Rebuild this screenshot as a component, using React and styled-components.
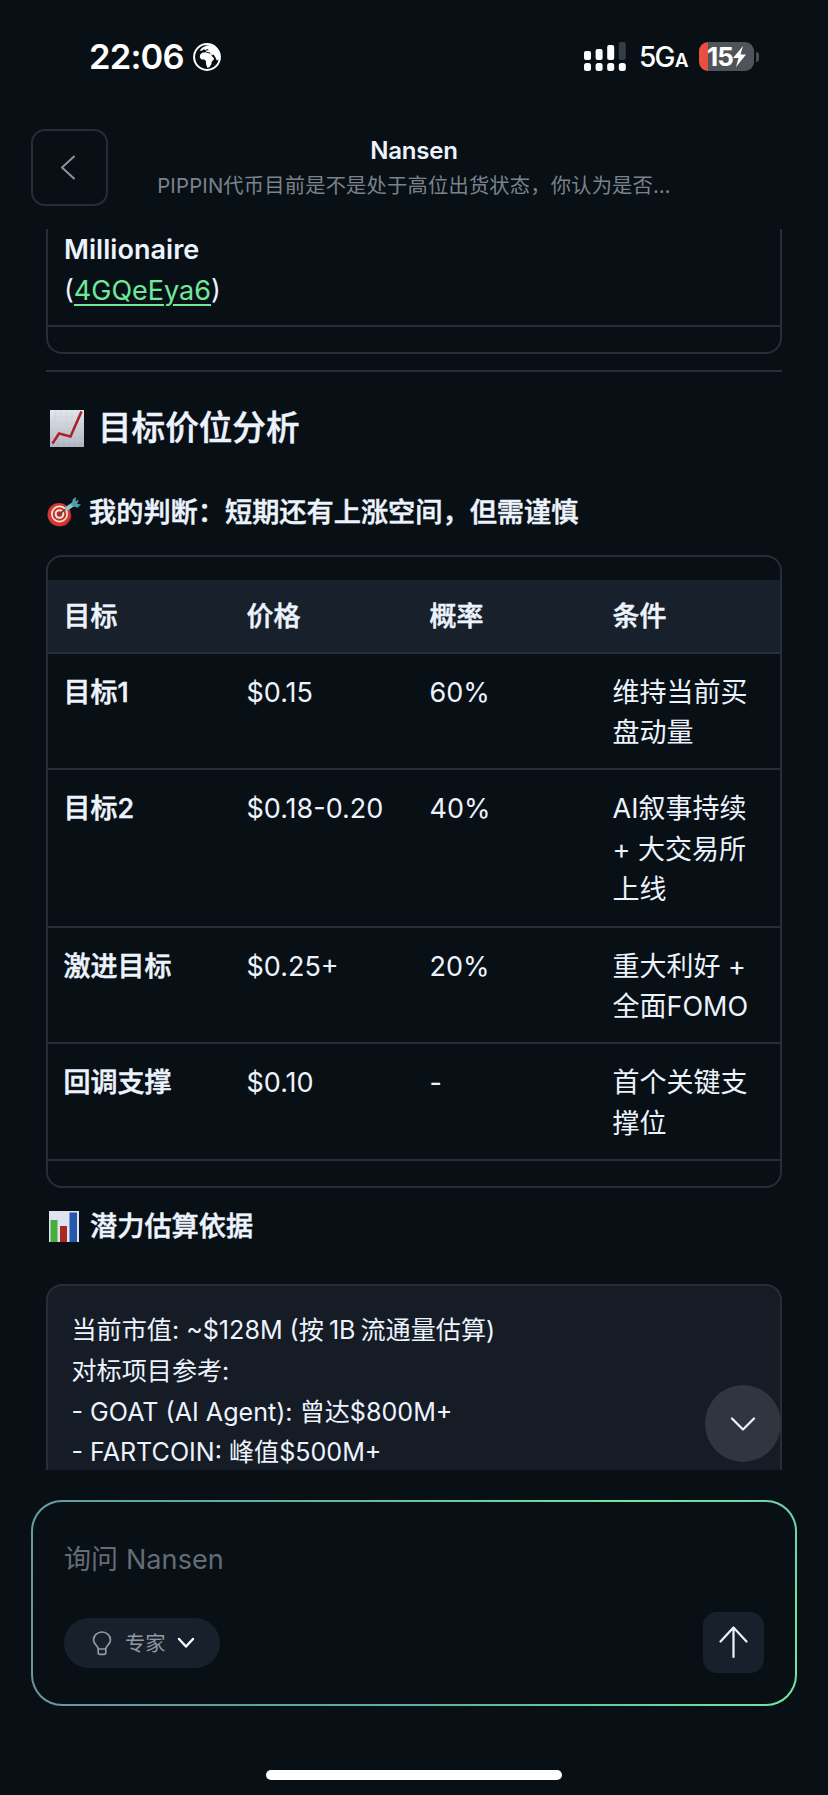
import React from 'react';
import styled, { createGlobalStyle, css } from 'styled-components'

const GlobalStyle = createGlobalStyle`
    * {
        box-sizing: border-box;
    }
    body {
        margin: 0;
        background: #081016;
    }
`
// halfway between the medium and bold cuts of the CJK font
const semibold = css`
    font-weight: 500;
    -webkit-text-stroke: 0.5px currentColor;
`
const Screen = styled.div`
    display: flex;
    flex-direction: column;
    width: 828px;
    height: 1795px;
    overflow: hidden;
    background: #081016;
    color: #edf3fd;
    font-family: Inter, "Noto Sans CJK SC", sans-serif;
    font-size: 27px;
    line-height: 41px;
    white-space: nowrap;
`
const StatusBar = styled.div`
    display: flex;
    align-items: center;
    height: 113px;
    padding: 0 69px 0 89px;
    flex-shrink: 0;
`
const Clock = styled.div`
    width: 104px;
    font-size: 34.5px;
    font-weight: 600;
    letter-spacing: -0.8px;
    color: #ffffff;
`
const StatusRight = styled.div`
    display: flex;
    align-items: center;
    margin-left: auto;
`
const Network = styled.div`
    width: 73px;
    padding: 5px 0 0 13px;
    font-size: 28px;
    font-weight: 500;
    letter-spacing: -1.7px;
    color: #ffffff;

    small {
        margin-left: 1px;
        font-size: 19px;
        font-weight: 600;
    }
`
const Battery = styled.div`
    display: flex;
    align-items: center;
    justify-content: center;
    width: 55px;
    height: 29px;
    border-radius: 9px;
    background: linear-gradient(90deg, #ea4e3f 9px, #4f545b 9px);
    font-size: 26px;
    font-weight: 700;
    letter-spacing: -0.8px;
    color: #ffffff;
`
const BatteryCap = styled.div`
    width: 3px;
    height: 10px;
    margin-left: 2px;
    border-radius: 0 3px 3px 0;
    background: #4a4f56;
`
const Header = styled.div`
    display: grid;
    grid-template-columns: 77px 1fr 77px;
    align-items: start;
    height: 116px;
    padding: 16px 31px 0;
    flex-shrink: 0;
`
const BackButton = styled.button`
    display: flex;
    align-items: center;
    justify-content: center;
    width: 77px;
    height: 77px;
    padding: 0 4px 0 0;
    border: 2px solid #272d34;
    border-radius: 14px;
    background: none;
`
const HeaderText = styled.div`
    display: flex;
    flex-direction: column;
    align-items: center;
    padding-top: 4px;
`
const Title = styled.div`
    height: 36px;
    line-height: 36px;
    font-size: 24px;
    font-weight: 600;
    letter-spacing: -0.2px;
`
const Subtitle = styled.div`
    height: 32px;
    line-height: 33px;
    font-size: 20.3px;
    letter-spacing: 0.18px;
    color: #7b828c;
`
const Scroller = styled.div`
    height: 1241px;
    padding: 0 46px;
    overflow: hidden;
    flex-shrink: 0;
`
const Sheet = styled.div`
    height: ${props => props.height}px;
    padding: ${props => props.open ? '0' : '23px'} 0 0;
    border: 2px solid #272e35;
    border-top-width: ${props => props.open ? '0' : '2px'};
    border-radius: ${props => props.open ? '0 0 16px 16px' : '16px'};
`
const Row = styled.div`
    display: grid;
    grid-template-columns: repeat(4, 183px);
    padding: ${props => props.head ? '17px 0 14px' : '19px 0 14.5px'};
    border-bottom: 2px solid #272e35;
    background: ${props => props.head ? '#18212b' : 'none'};
    line-height: 40.6px;
    ${props => props.head && semibold}
`
const Cell = styled.div`
    padding-left: 15.5px;
    ${props => props.strong && semibold}
`
const Holder = styled.div`
    height: 98px;
    padding: 0 16px;
    border-bottom: 2px solid #272e35;
`
const HolderName = styled.div`
    font-weight: 600;
    letter-spacing: 0.05px;
`
const Link = styled.a`
    color: #6fe89b;
    text-decoration: underline;
    text-decoration-thickness: 2px;
    text-underline-offset: 4px;
`
const Divider = styled.div`
    height: 2px;
    margin-top: 16px;
    background: #272e35;
`
const Heading = styled.div`
    display: flex;
    align-items: center;
    height: 50px;
    margin-top: 30px;
    font-size: 33.6px;
    ${semibold}

    svg {
        margin: 2px 14px 0 4px;
    }
`
const SubHeading = styled.div`
    display: flex;
    align-items: center;
    height: 42px;
    margin: ${props => props.gap} 0 ${props => props.after}px;
    font-size: 27.2px;
    ${semibold}

    svg {
        flex-shrink: 0;
        margin-right: 8px;
    }
`
const CodeBlock = styled.div`
    height: 240px;
    padding: 24px 23.5px;
    border: 2px solid #272e35;
    border-radius: 16px;
    background: #151c25;
    font-size: 25.1px;
`
const CodeLine = styled.div`
    height: 40.8px;
`
const Amount = styled.span`
    margin: 0 5px;
`
const ScrollDown = styled.button`
    position: absolute;
    left: 705px;
    top: 1385px;
    display: flex;
    align-items: center;
    justify-content: center;
    width: 76px;
    height: 77px;
    padding: 2px 0 0;
    border: 0;
    border-radius: 50%;
    background: #30363f;
`
const Composer = styled.div`
    display: flex;
    flex-direction: column;
    justify-content: space-between;
    width: 766px;
    height: 206px;
    margin: 30px 31px 0;
    padding: 37px 31px 31px;
    flex-shrink: 0;
    border: 2px solid transparent;
    border-radius: 31px;
    background:
        linear-gradient(#081016, #081016) padding-box,
        linear-gradient(52deg, #6d93a1 0%, #5fa39f 26%, #62b9a0 50%, #75e6a0 82%, #74cfa9 100%) border-box;
`
const Placeholder = styled.div`
    color: #656c75;
    letter-spacing: 0.1px;
`
const Toolbar = styled.div`
    display: flex;
    align-items: center;
    justify-content: space-between;
`
const ModePill = styled.div`
    display: flex;
    align-items: center;
    width: 156px;
    height: 50px;
    padding: 1px 0 0 28px;
    border-radius: 25px;
    background: #18212b;
    font-size: 20.3px;
    color: #9299a4;

    span {
        width: 65px;
        padding-left: 13px;
    }
`
const SendButton = styled.button`
    display: flex;
    align-items: center;
    justify-content: center;
    width: 61px;
    height: 61px;
    padding: 0;
    border: 0;
    border-radius: 14px;
    background: #18212b;
`
const HomeBar = styled.div`
    width: 296px;
    height: 10px;
    margin: 64px auto 0;
    flex-shrink: 0;
    border-radius: 5px;
    background: #ffffff;
`

const Chevron = ({ width, height, points, color, stroke = 2 }) => (
  <svg width={width} height={height} fill="none" stroke={color} strokeWidth={stroke} strokeLinecap="round" strokeLinejoin="round">
    <polyline points={points} />
  </svg>
)

const Globe = () => (
  <svg width="28" height="28" viewBox="0 0 28 28">
    <circle cx="14" cy="14" r="12.9" fill="none" stroke="#fff" strokeWidth="2" />
    <path fill="#fff" d="M6.500 7.500l3-3 4-2 4-.5 4 1.500 3.500 4 1.500 5-.5 4-2.200 1-1.300-3-2-3-1.500.8-2.500-3-3-.3-1-1.200 3-.5-.5-1.200-2.500.8-2-.6-1.500 1.400z" />
    <path fill="#fff" d="M7 12l2-2.200 3.500-.6 2 .9 3 .4 1.500 2.800 2 2-.3 1.500-2 2-.4 2.500-2 3-2 .5-1.200-3.500-.2-3.300-1.400-1.500-3 .1-1.700-2z" />
  </svg>
)

const Signal = () => (
  <svg width="42" height="29" viewBox="0 0 42 29" fill="#fff">
    <rect x="0" y="9" width="7" height="9" rx="2" />
    <rect x="11.600" y="7" width="7" height="11" rx="2" />
    <rect x="23.200" y="3" width="7" height="15" rx="2" />
    <rect x="34.800" y="0" width="7" height="18" rx="2" fill="#363c43" />
    {[0, 11.6, 23.2, 34.8].map(x => <rect key={x} x={x} y="21" width="7" height="8" rx="2.500" />)}
  </svg>
)

const Bolt = () => (
  <svg width="13" height="21" viewBox="0 0 13 21">
    <path fill="#fff" d="M10 0L0 12h5.500L3 21 13 8.500H7.500z" />
  </svg>
)

const ChartUp = () => (
  <svg width="34" height="37" viewBox="0 0 34 37">
    <defs>
      <linearGradient id="paper" x1="0" y1="0" x2="0" y2="1">
        <stop offset="0" stopColor="#e2e7ee" />
        <stop offset="1" stopColor="#aeb4bd" />
      </linearGradient>
    </defs>
    <rect width="34" height="37" fill="url(#paper)" />
    <path d="M5.500 1v35M11 1v35M16.500 1v35M22 1v35M27.500 1v35M1 7h32M1 13h32M1 19h32M1 25h32M1 31h32" stroke="#c8ced8" strokeWidth="0.500" />
    <path d="M2.500 33.500L9 23.500l11.500 3L31.500 1.500" fill="none" stroke="#ad2229" strokeWidth="2.600" />
  </svg>
)

const Target = () => (
  <svg width="35" height="30" viewBox="0 0 35 30">
    <ellipse cx="14.500" cy="18.500" rx="11" ry="11" fill="#8e211d" />
    <circle cx="13" cy="17.500" r="11.500" fill="#d5382e" />
    <circle cx="13.500" cy="17" r="8.500" fill="#f3e4dc" />
    <circle cx="13.500" cy="17" r="6.800" fill="#c5352c" />
    <circle cx="13.500" cy="17" r="4.800" fill="#f3e4dc" />
    <circle cx="13.500" cy="17" r="2.800" fill="#b52a24" />
    <path d="M13.500 17L23 9.500" stroke="#7a3f36" strokeWidth="1.600" />
    <path d="M21 11.500l6-4" stroke="#8fc7cf" strokeWidth="4" strokeLinecap="round" />
    <path d="M25 8.500l2-6.500 3-2-.3 4L33 3l-2 3.800 4 .7-3.500 3.200z" fill="#4f9ba8" />
  </svg>
)

const Bars = () => (
  <svg width="36" height="31" viewBox="0 0 36 31">
    <rect x="3" width="30" height="31" fill="#e0e3f0" />
    <rect x="4.500" y="9" width="7" height="22" fill="#47ad3d" />
    <rect x="14" y="15" width="7" height="16" fill="#a92820" />
    <rect x="23.500" y="1.500" width="7.500" height="29.500" fill="#2457ae" />
  </svg>
)

const Bulb = () => (
  <svg width="20" height="25" viewBox="0 0 20 25" fill="none" stroke="#9299a4" strokeWidth="1.700" strokeLinejoin="round">
    <path d="M6.200 18C6 14.500 1.500 13.500 1.500 9a8.500 8 0 0 1 17 0c0 4.500-4.500 5.500-4.700 9z" />
    <path d="M6.200 18v3.500q0 1.800 1.800 1.800h4q1.800 0 1.800-1.800V18" />
  </svg>
)

const ArrowUp = () => (
  <svg width="29" height="33" viewBox="0 0 29 33" fill="none" stroke="#edf3fd" strokeWidth="2.200" strokeLinecap="round" strokeLinejoin="round">
    <path d="M14.500 31V1.500M1.500 15.500l13-14 13 14" />
  </svg>
)

const targets = [
  { name: '目标1', price: '$0.15', odds: '60%', lines: ['维持当前买', '盘动量'] },
  { name: '目标2', price: '$0.18-0.20', odds: '40%', lines: ['AI叙事持续', '+ 大交易所', '上线'] },
  { name: '激进目标', price: '$0.25+', odds: '20%', lines: ['重大利好 +', '全面FOMO'] },
  { name: '回调支撑', price: '$0.10', odds: '-', lines: ['首个关键支', '撑位'] },
]

const App = () => {
  return (
    <Screen>
      <GlobalStyle />
      <StatusBar>
        <Clock>22:06</Clock>
        <Globe />
        <StatusRight>
          <Signal />
          <Network>5G<small>A</small></Network>
          <Battery>15<Bolt /></Battery>
          <BatteryCap />
        </StatusRight>
      </StatusBar>
      <Header>
        <BackButton>
          <Chevron width={16} height={25} points="14,1.500 2,12.500 14,23.500" color="#8d939b" />
        </BackButton>
        <HeaderText>
          <Title>Nansen</Title>
          <Subtitle>PIPPIN代币目前是不是处于高位出货状态，你认为是否…</Subtitle>
        </HeaderText>
      </Header>
      <Scroller>
        <Sheet open height={125}>
          <Holder>
            <HolderName>Millionaire</HolderName>
            <div>(<Link>4GQeEya6</Link>)</div>
          </Holder>
        </Sheet>
        <Divider />
        <Heading><ChartUp />目标价位分析</Heading>
        <SubHeading gap="39px" after={22}><Target />我的判断：短期还有上涨空间，但需谨慎</SubHeading>
        <Sheet height={633}>
          <Row head>
            <Cell>目标</Cell>
            <Cell>价格</Cell>
            <Cell>概率</Cell>
            <Cell>条件</Cell>
          </Row>
          {targets.map(item => (
            <Row key={item.name}>
              <Cell strong>{item.name}</Cell>
              <Cell>{item.price}</Cell>
              <Cell>{item.odds}</Cell>
              <Cell>{item.lines.map(line => <div key={line}>{line}</div>)}</Cell>
            </Row>
          ))}
        </Sheet>
        <SubHeading gap="17px" after={37}><Bars />潜力估算依据</SubHeading>
        <CodeBlock>
          <CodeLine>当前市值: ~$128M (按<Amount>1B</Amount>流通量估算)</CodeLine>
          <CodeLine>对标项目参考:</CodeLine>
          <CodeLine>- GOAT (AI Agent): 曾达$800M+</CodeLine>
          <CodeLine>- FARTCOIN: 峰值$500M+</CodeLine>
        </CodeBlock>
      </Scroller>
      <ScrollDown>
        <Chevron width={26} height={15} points="2,1.500 13,12.500 24,1.500" color="#edf3fd" stroke={2.2} />
      </ScrollDown>
      <Composer>
        <Placeholder>询问 Nansen</Placeholder>
        <Toolbar>
          <ModePill>
            <Bulb />
            <span>专家</span>
            <Chevron width={18} height={12} points="2,2 9,9.500 16,2" color="#ffffff" stroke={2.4} />
          </ModePill>
          <SendButton>
            <ArrowUp />
          </SendButton>
        </Toolbar>
      </Composer>
      <HomeBar />
    </Screen>
  )
}

export default App;
